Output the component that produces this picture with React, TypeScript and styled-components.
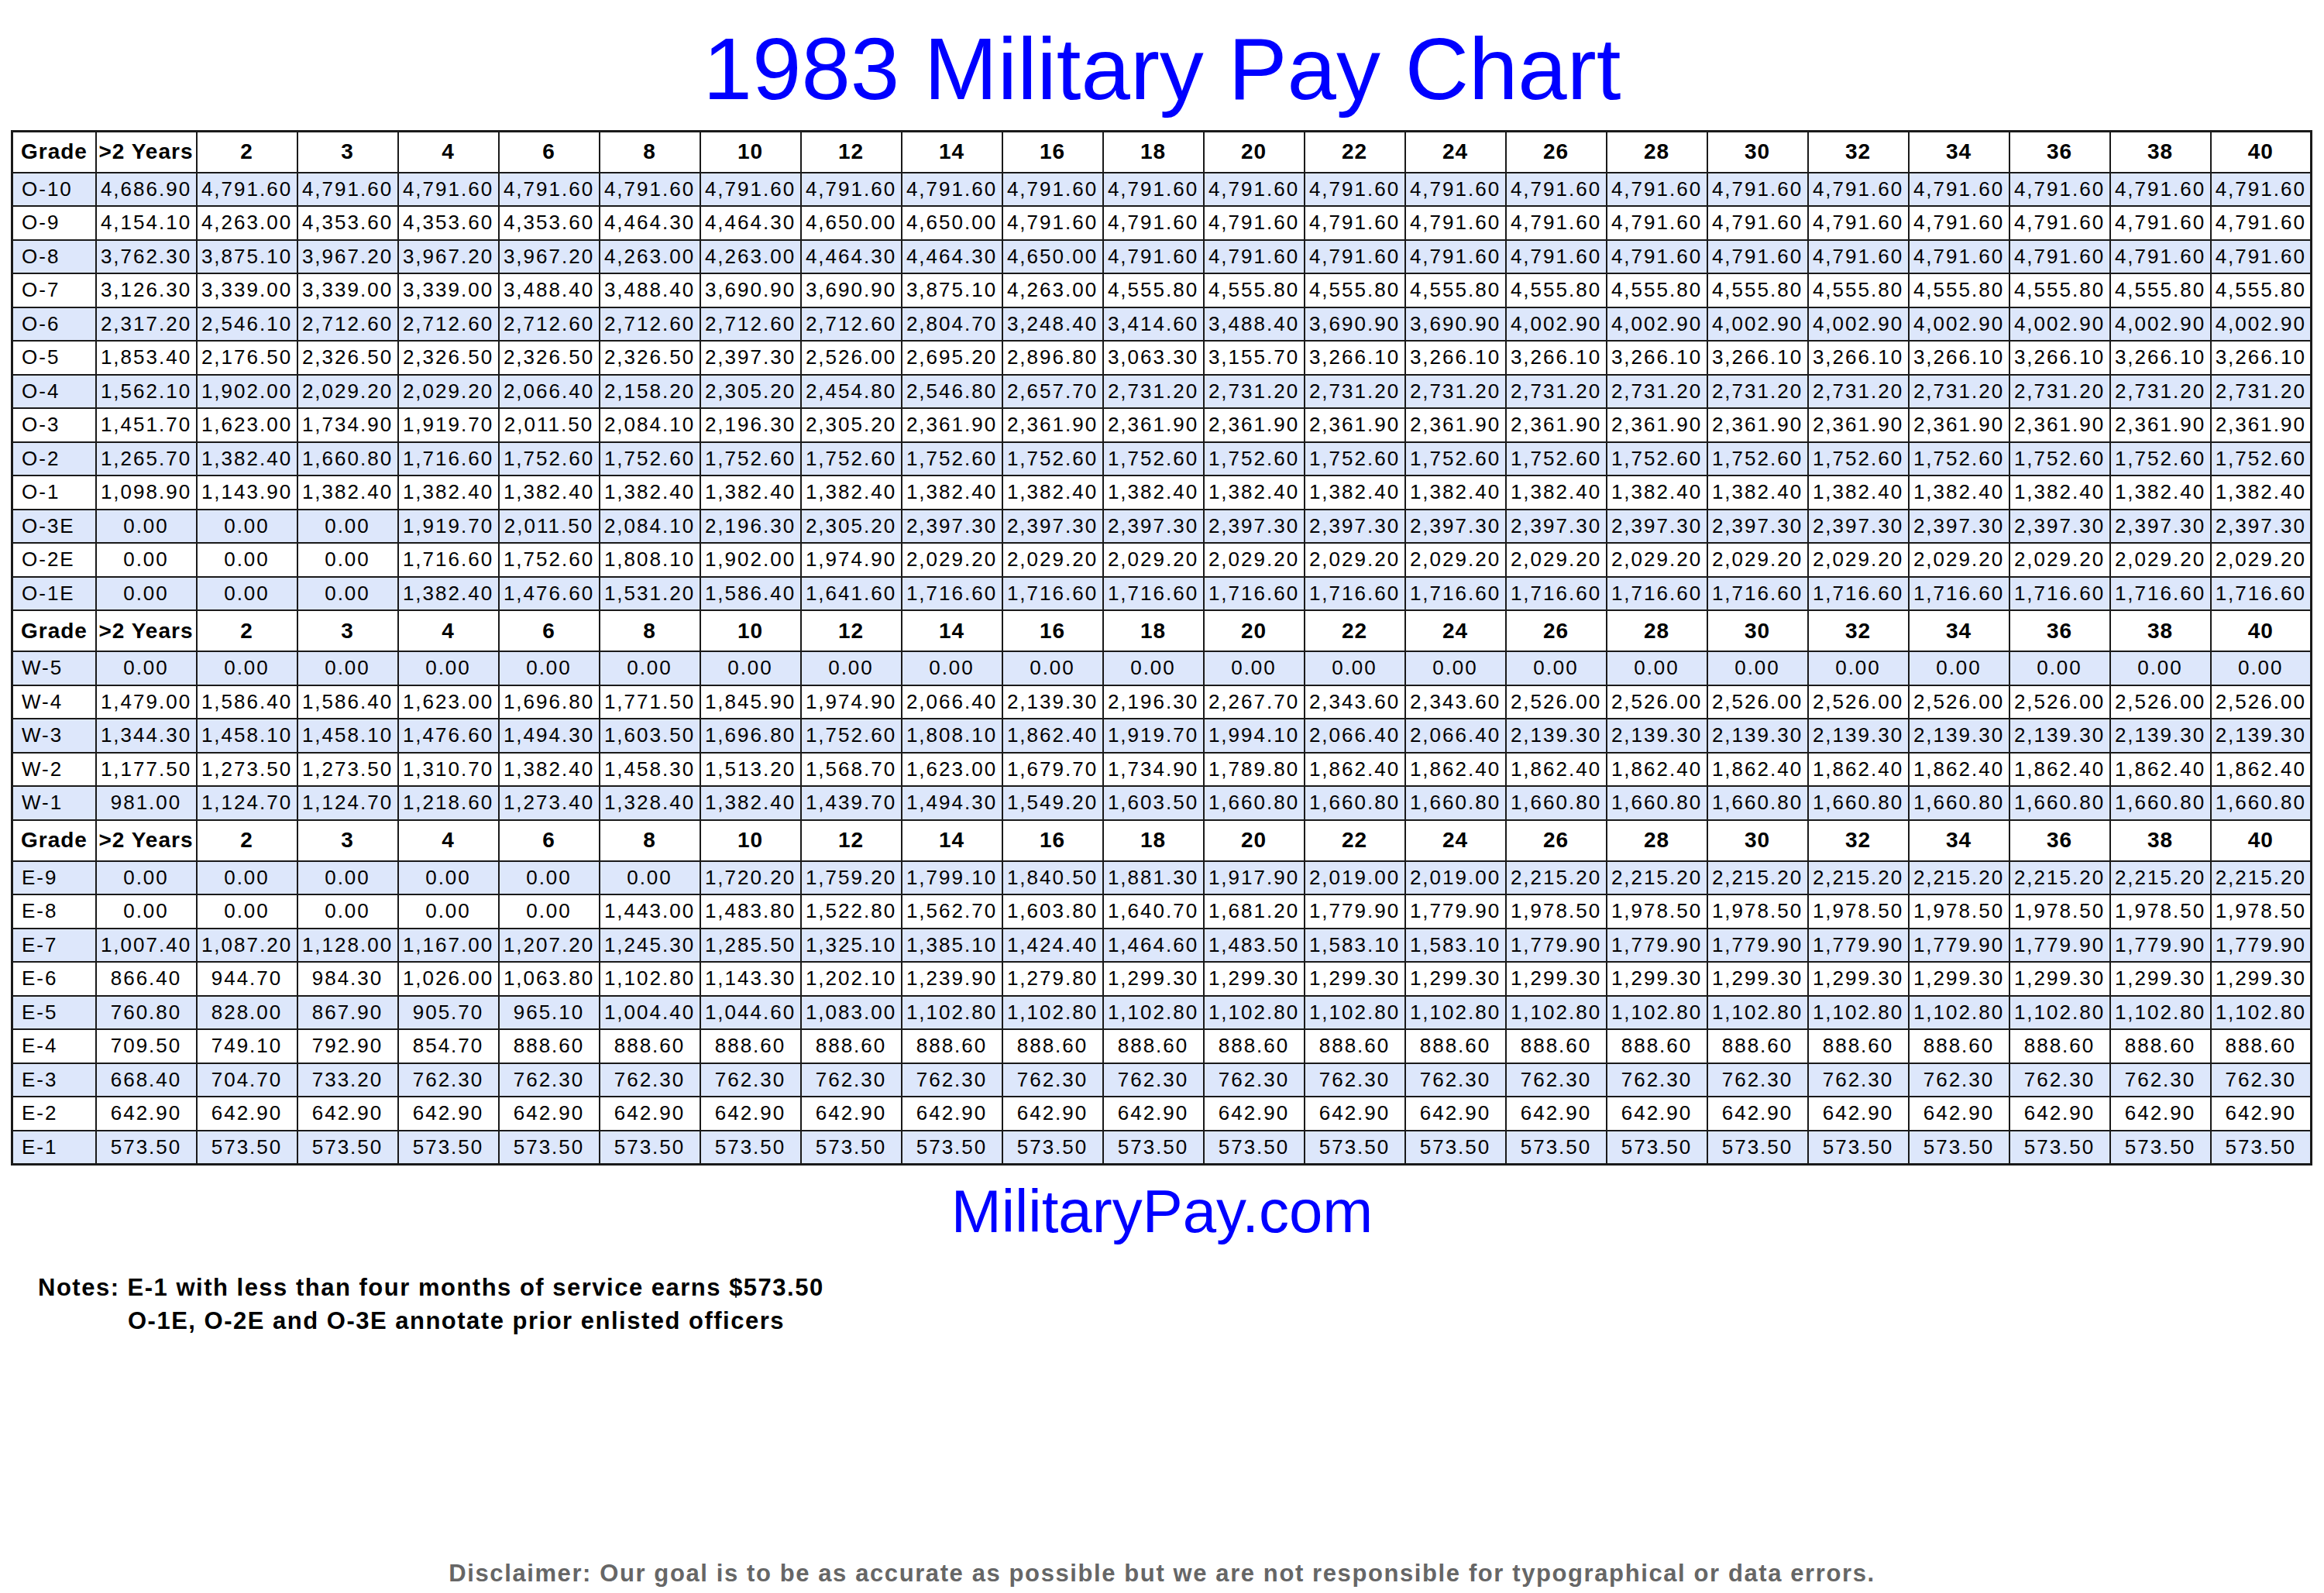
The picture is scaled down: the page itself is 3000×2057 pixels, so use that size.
import styled, { createGlobalStyle } from "styled-components";

const GlobalStyle = createGlobalStyle`
    html, body {
        margin: 0;
        padding: 0;
        background: #ffffff;
    }
    body {
        font-family: "Liberation Sans", Arial, sans-serif;
        color: #000000;
    }
`;

const Page = styled.div`
    display: flex;
    flex-direction: column;
    width: 3000px;
    min-height: 2057px;
    box-sizing: border-box;
    padding-bottom: 10px;
`;

const Title = styled.h1`
    margin: 32px 0 0;
    height: 114px;
    font-size: 114px;
    line-height: 114px;
    font-weight: normal;
    text-align: center;
    color: #0000ff;
`;

const PayTable = styled.table`
    margin: 22px 0 0 14px;
    width: 2971px;
    table-layout: fixed;
    border-collapse: collapse;
    border: 3px solid #1a1a1a;
`;

const HeadRow = styled.tr`
    height: 53px;
    background: #ffffff;
`;

const Row = styled.tr<{ $shade: boolean }>`
    height: 43.5px;
    background: ${(p) => (p.$shade ? "#dde7fb" : "#ffffff")};
`;

const HeadCell = styled.th<{ $first?: boolean }>`
    border: 2px solid #1a1a1a;
    padding: 0 0 0 ${(p) => (p.$first ? "10px" : "0")};
    font-size: 28px;
    font-weight: bold;
    letter-spacing: 1px;
    white-space: nowrap;
    text-align: ${(p) => (p.$first ? "left" : "center")};
    overflow: hidden;
`;

const Cell = styled.td<{ $first?: boolean }>`
    border: 2px solid #1a1a1a;
    padding: 0 0 0 ${(p) => (p.$first ? "11px" : "0")};
    font-size: 26px;
    letter-spacing: 2px;
    white-space: nowrap;
    text-align: ${(p) => (p.$first ? "left" : "center")};
    overflow: hidden;
`;

const SiteName = styled.div`
    margin-top: 20px;
    height: 78px;
    font-size: 78px;
    line-height: 78px;
    text-align: center;
    color: #0000ff;
`;

const Notes = styled.div`
    margin-top: 38px;
    padding-left: 49px;
    font-size: 31px;
    line-height: 43px;
    font-weight: bold;
    letter-spacing: 1.5px;
`;

const NoteLine = styled.div<{ $indent?: boolean }>`
    padding-left: ${(p) => (p.$indent ? "116px" : "0")};
`;

const Disclaimer = styled.div`
    margin-top: auto;
    font-size: 31px;
    line-height: 31px;
    font-weight: bold;
    letter-spacing: 1.6px;
    text-align: center;
    color: #666666;
`;

const years = ["2", "3", "4", "6", "8", "10", "12", "14", "16", "18", "20", "22", "24", "26", "28", "30", "32", "34", "36", "38", "40"];

// values listed until they stop changing, the rest is padded
const fill = (vals: string[]) => {
    const out = [...vals];
    while (out.length < 22) out.push(vals[vals.length - 1]);
    return out;
};

const officers: [string, string[]][] = [
    ["O-10", ["4,686.90", "4,791.60"]],
    ["O-9", ["4,154.10", "4,263.00", "4,353.60", "4,353.60", "4,353.60", "4,464.30", "4,464.30", "4,650.00", "4,650.00", "4,791.60"]],
    ["O-8", ["3,762.30", "3,875.10", "3,967.20", "3,967.20", "3,967.20", "4,263.00", "4,263.00", "4,464.30", "4,464.30", "4,650.00", "4,791.60"]],
    ["O-7", ["3,126.30", "3,339.00", "3,339.00", "3,339.00", "3,488.40", "3,488.40", "3,690.90", "3,690.90", "3,875.10", "4,263.00", "4,555.80"]],
    ["O-6", ["2,317.20", "2,546.10", "2,712.60", "2,712.60", "2,712.60", "2,712.60", "2,712.60", "2,712.60", "2,804.70", "3,248.40", "3,414.60", "3,488.40", "3,690.90", "3,690.90", "4,002.90"]],
    ["O-5", ["1,853.40", "2,176.50", "2,326.50", "2,326.50", "2,326.50", "2,326.50", "2,397.30", "2,526.00", "2,695.20", "2,896.80", "3,063.30", "3,155.70", "3,266.10"]],
    ["O-4", ["1,562.10", "1,902.00", "2,029.20", "2,029.20", "2,066.40", "2,158.20", "2,305.20", "2,454.80", "2,546.80", "2,657.70", "2,731.20"]],
    ["O-3", ["1,451.70", "1,623.00", "1,734.90", "1,919.70", "2,011.50", "2,084.10", "2,196.30", "2,305.20", "2,361.90"]],
    ["O-2", ["1,265.70", "1,382.40", "1,660.80", "1,716.60", "1,752.60"]],
    ["O-1", ["1,098.90", "1,143.90", "1,382.40"]],
    ["O-3E", ["0.00", "0.00", "0.00", "1,919.70", "2,011.50", "2,084.10", "2,196.30", "2,305.20", "2,397.30"]],
    ["O-2E", ["0.00", "0.00", "0.00", "1,716.60", "1,752.60", "1,808.10", "1,902.00", "1,974.90", "2,029.20"]],
    ["O-1E", ["0.00", "0.00", "0.00", "1,382.40", "1,476.60", "1,531.20", "1,586.40", "1,641.60", "1,716.60"]],
];

const warrants: [string, string[]][] = [
    ["W-5", ["0.00"]],
    ["W-4", ["1,479.00", "1,586.40", "1,586.40", "1,623.00", "1,696.80", "1,771.50", "1,845.90", "1,974.90", "2,066.40", "2,139.30", "2,196.30", "2,267.70", "2,343.60", "2,343.60", "2,526.00"]],
    ["W-3", ["1,344.30", "1,458.10", "1,458.10", "1,476.60", "1,494.30", "1,603.50", "1,696.80", "1,752.60", "1,808.10", "1,862.40", "1,919.70", "1,994.10", "2,066.40", "2,066.40", "2,139.30"]],
    ["W-2", ["1,177.50", "1,273.50", "1,273.50", "1,310.70", "1,382.40", "1,458.30", "1,513.20", "1,568.70", "1,623.00", "1,679.70", "1,734.90", "1,789.80", "1,862.40"]],
    ["W-1", ["981.00", "1,124.70", "1,124.70", "1,218.60", "1,273.40", "1,328.40", "1,382.40", "1,439.70", "1,494.30", "1,549.20", "1,603.50", "1,660.80"]],
];

const enlisted: [string, string[]][] = [
    ["E-9", ["0.00", "0.00", "0.00", "0.00", "0.00", "0.00", "1,720.20", "1,759.20", "1,799.10", "1,840.50", "1,881.30", "1,917.90", "2,019.00", "2,019.00", "2,215.20"]],
    ["E-8", ["0.00", "0.00", "0.00", "0.00", "0.00", "1,443.00", "1,483.80", "1,522.80", "1,562.70", "1,603.80", "1,640.70", "1,681.20", "1,779.90", "1,779.90", "1,978.50"]],
    ["E-7", ["1,007.40", "1,087.20", "1,128.00", "1,167.00", "1,207.20", "1,245.30", "1,285.50", "1,325.10", "1,385.10", "1,424.40", "1,464.60", "1,483.50", "1,583.10", "1,583.10", "1,779.90"]],
    ["E-6", ["866.40", "944.70", "984.30", "1,026.00", "1,063.80", "1,102.80", "1,143.30", "1,202.10", "1,239.90", "1,279.80", "1,299.30"]],
    ["E-5", ["760.80", "828.00", "867.90", "905.70", "965.10", "1,004.40", "1,044.60", "1,083.00", "1,102.80"]],
    ["E-4", ["709.50", "749.10", "792.90", "854.70", "888.60"]],
    ["E-3", ["668.40", "704.70", "733.20", "762.30"]],
    ["E-2", ["642.90"]],
    ["E-1", ["573.50"]],
];

function HeaderRow() {
    return (
        <HeadRow>
            <HeadCell $first>Grade</HeadCell>
            <HeadCell>&gt;2 Years</HeadCell>
            {years.map((y) => (
                <HeadCell key={y}>{y}</HeadCell>
            ))}
        </HeadRow>
    );
}

function Section({ rows }: { rows: [string, string[]][] }) {
    return (
        <>
            <HeaderRow />
            {rows.map(([grade, vals], i) => (
                <Row key={grade} $shade={i % 2 === 0}>
                    <Cell $first>{grade}</Cell>
                    {fill(vals).map((v, j) => (
                        <Cell key={j}>{v}</Cell>
                    ))}
                </Row>
            ))}
        </>
    );
}

function App() {
    return (
        <>
            <GlobalStyle />
            <Page>
                <Title>1983 Military Pay Chart</Title>
                <PayTable>
                    <colgroup>
                        <col style={{ width: "108px" }} />
                        {Array.from({ length: 22 }).map((_, i) => (
                            <col key={i} />
                        ))}
                    </colgroup>
                    <tbody>
                        <Section rows={officers} />
                        <Section rows={warrants} />
                        <Section rows={enlisted} />
                    </tbody>
                </PayTable>
                <SiteName>MilitaryPay.com</SiteName>
                <Notes>
                    <NoteLine>Notes: E-1 with less than four months of service earns $573.50</NoteLine>
                    <NoteLine $indent>O-1E, O-2E and O-3E annotate prior enlisted officers</NoteLine>
                </Notes>
                <Disclaimer>
                    Disclaimer: Our goal is to be as accurate as possible but we are not responsible for typographical or data errors.
                </Disclaimer>
            </Page>
        </>
    );
}

export default App;
